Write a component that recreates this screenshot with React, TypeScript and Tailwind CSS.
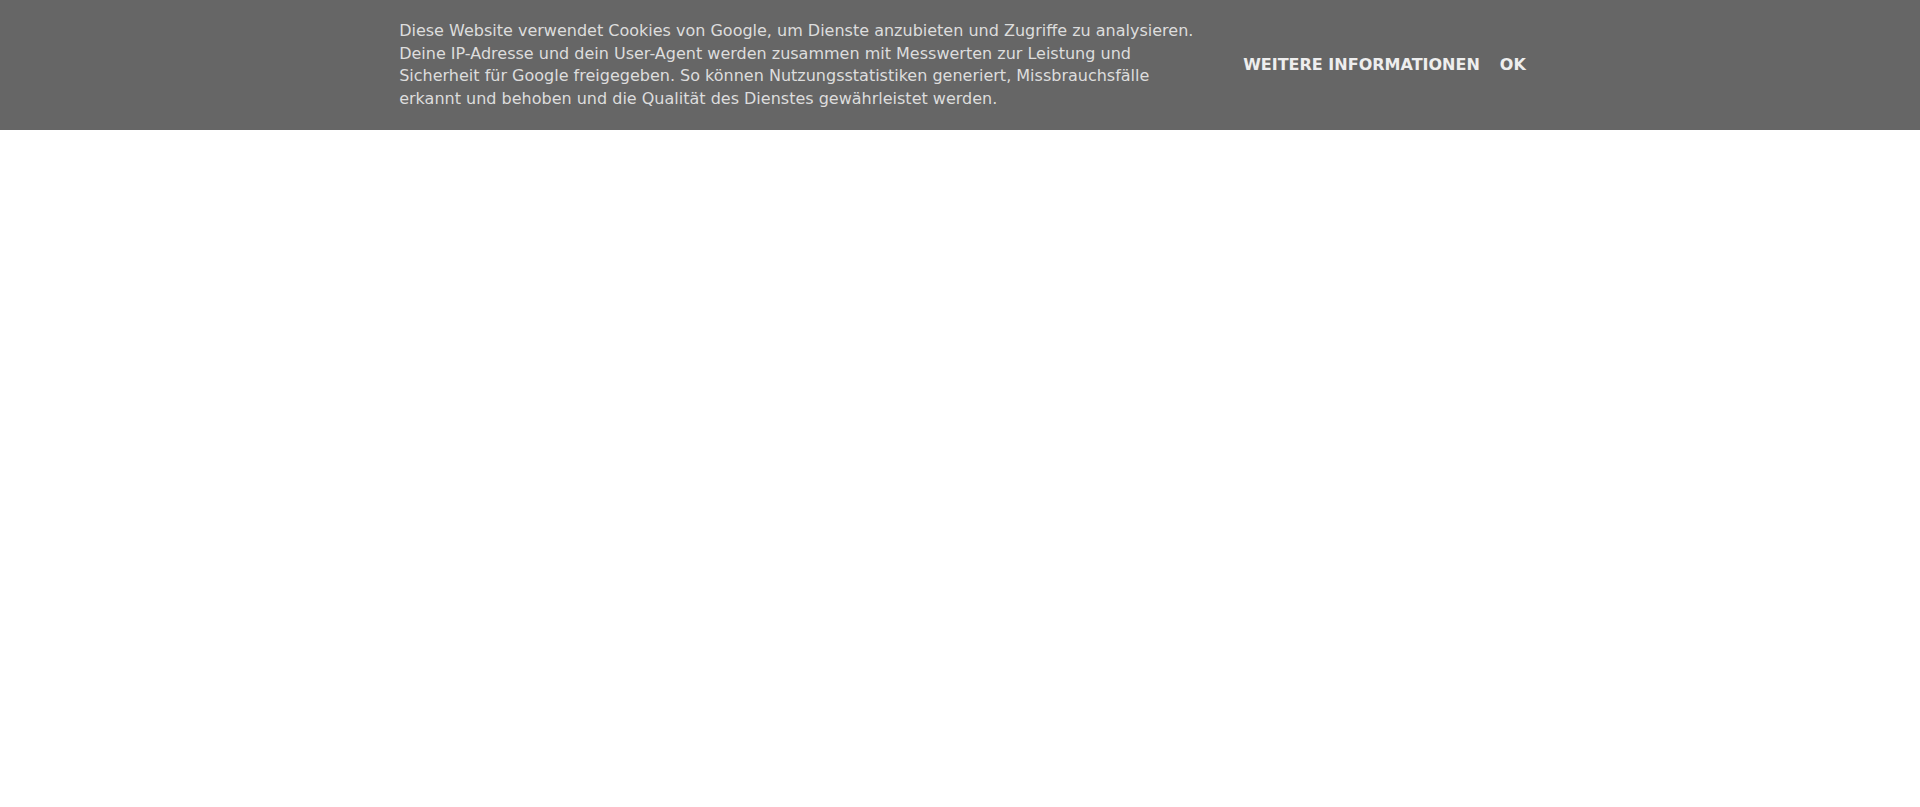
export default function App() {
  return (
    <div className="min-h-screen bg-white" style={{ fontFamily: '"DejaVu Sans", sans-serif' }}>
      {/* Cookie notice */}
      <div className="flex w-full items-center justify-center bg-[#666666]">
        <div className="m-[20px] w-[800px] text-left text-[16px] leading-[22.5px] text-[#dddddd]">
          Diese Website verwendet Cookies von Google, um Dienste anzubieten und Zugriffe zu analysieren. Deine
          IP-Adresse und dein User-Agent werden zusammen mit Messwerten zur Leistung und Sicherheit für Google
          freigegeben. So können Nutzungsstatistiken generiert, Missbrauchsfälle erkannt und behoben und die Qualität
          des Dienstes gewährleistet werden.
        </div>
        <div className="mr-[7px] flex items-center whitespace-nowrap">
          <a className="ml-[16px] px-[8px] text-[16px] font-bold uppercase text-[#eeeeee]">Weitere Informationen</a>
          <a className="ml-[4px] px-[8px] text-[16px] font-bold uppercase text-[#eeeeee]">OK</a>
        </div>
      </div>
    </div>
  );
}
